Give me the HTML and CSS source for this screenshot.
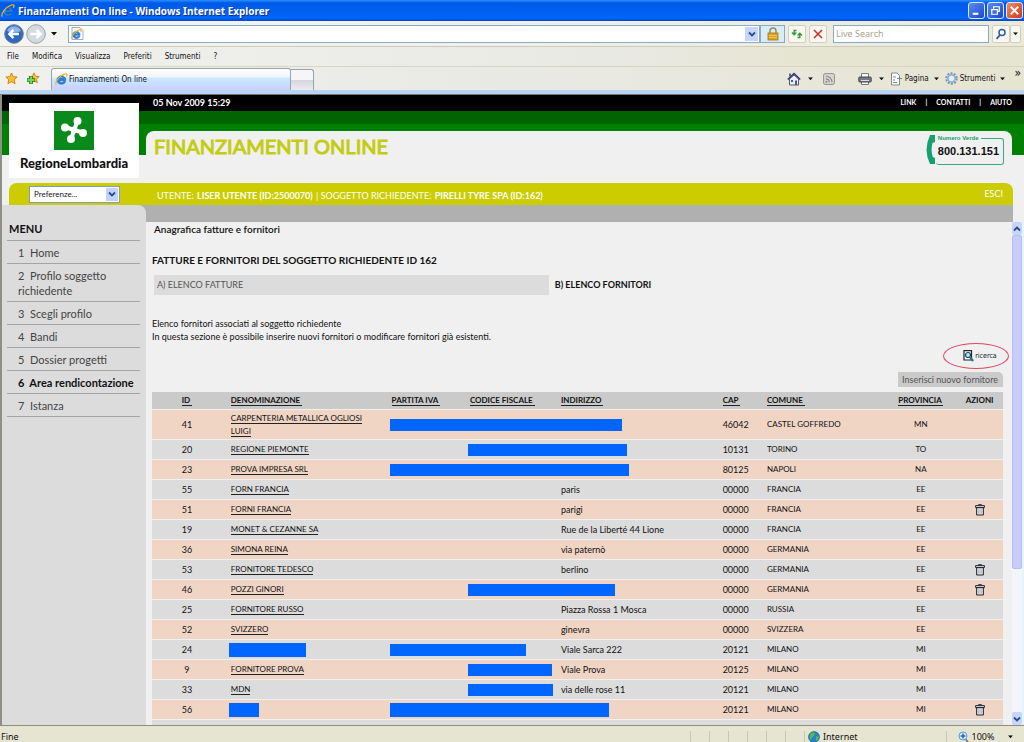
FILE: index.html
```html
<!DOCTYPE html>
<html lang="it">
<head>
<meta charset="utf-8">
<title>Finanziamenti On line</title>
<link rel="stylesheet" href="styles.css">
</head>
<body>
<svg class="defs" width="0" height="0" aria-hidden="true">
  <symbol id="ie" viewBox="0 0 14 14">
    <path d="M11.600 8H4.800c.2 2.600 3.200 2.800 4.100 1.300h2.500C10 13.300 2 13 2.200 7.200 2.400 1.800 11.900 1.400 11.600 8zM4.800 6h4.400C9 3.900 5.100 3.900 4.800 6z" fill="#2a86e0" stroke="#1560b8" stroke-width=".8"/>
    <path d="M1.500 12.500C-.5 11 4 3 10.500 1c3-.8 3 1 1.800 3" fill="none" stroke="#f0b020" stroke-width="1.300"/>
  </symbol>
  <symbol id="down" viewBox="0 0 8 8"><path d="M1 2.500l3 3 3-3" fill="none" stroke="#2b4a8c" stroke-width="1.800"/></symbol>
  <symbol id="up" viewBox="0 0 8 8"><path d="M1 5.500l3-3 3 3" fill="none" stroke="#2b4a8c" stroke-width="1.800"/></symbol>
  <symbol id="tri" viewBox="0 0 6 4"><path d="M0 0h6L3 3.500z" fill="#111"/></symbol>
  <symbol id="star" viewBox="0 0 14 14"><path d="M7 1l1.800 4 4.300.4-3.200 2.900 1 4.300L7 10.400l-3.900 2.200 1-4.300L.9 5.400 5.200 5z" fill="#fbc02d" stroke="#c77a08" stroke-width=".9"/></symbol>
  <symbol id="trash" viewBox="0 0 10 12"><path d="M3.500 1.500V.7h3v.8M.6 1.600h8.800v2H.6zM1.600 3.600h6.800V11H1.600z" fill="#ddd" stroke="#222838" stroke-width="1"/><path d="M3.800 5.500v4M6.200 5.500v4" stroke="#8a8f98" stroke-width=".6"/></symbol>
</svg>

<header class="titlebar">
  <svg width="14" height="14"><use href="#ie"/></svg>
  <span class="title-text">Finanziamenti On line - Windows Internet Explorer</span>
  <button class="win" aria-label="Riduci"><svg width="16" height="16" viewBox="0 0 16 16"><path d="M4 11.500h6" stroke="#fff" stroke-width="2.200"/></svg></button>
  <button class="win" aria-label="Ripristina"><svg width="16" height="16" viewBox="0 0 16 16"><path d="M6 6V4h6v5h-2M4 7h6v5H4z" fill="none" stroke="#fff" stroke-width="1.300"/></svg></button>
  <button class="win close" aria-label="Chiudi"><svg width="16" height="16" viewBox="0 0 16 16"><path d="M4 4l8 8M12 4l-8 8" stroke="#fff" stroke-width="2"/></svg></button>
</header>

<div class="addressbar">
  <button class="plain" aria-label="Indietro"><svg width="20" height="20" viewBox="0 0 20 20"><circle cx="10" cy="10" r="9.300" fill="#2d68bd" stroke="#6d7f98"/><path d="M3 7a7.600 7.600 0 0 1 14 0q-7 3-14 0z" fill="#8db4e6"/><path d="M15 10H6M9.500 5.800L5.300 10l4.200 4.200" fill="none" stroke="#fff" stroke-width="2.400"/></svg></button>
  <button class="plain" aria-label="Avanti"><svg width="20" height="20" viewBox="0 0 20 20"><circle cx="10" cy="10" r="9.300" fill="#d5dae0" stroke="#9aa1aa"/><path d="M4.500 10H14M10.500 5.800l4.200 4.200-4.200 4.200" fill="none" stroke="#fff" stroke-width="2.400"/></svg></button>
  <button class="plain recent" aria-label="Cronologia"><svg width="6" height="4"><use href="#tri"/></svg></button>
  <div class="field url">
    <svg class="page-ico" width="13" height="13" viewBox="0 0 13 13"><path d="M1 .5h8l3 3v9H1z" fill="#fff" stroke="#aab"/><use href="#ie" x="0" y="2" width="11" height="11"/></svg>
    <input type="text" aria-label="Indirizzo">
    <button class="drop" aria-label="Mostra indirizzi"><svg width="8" height="8"><use href="#down"/></svg></button>
  </div>
  <button class="lock" aria-label="Protezione"><svg width="12" height="14" viewBox="0 0 12 14"><path d="M3 7V4a3 3 0 0 1 6 0v3" fill="none" stroke="#a08a50" stroke-width="1.500"/><rect x="1" y="6" width="10" height="7" fill="#dfa320" stroke="#a87410" stroke-width=".8"/><path d="M2 8.500h8M2 10.500h8" stroke="#f6d070" stroke-width=".7"/></svg></button>
  <button class="tool" aria-label="Aggiorna"><svg width="12" height="12" viewBox="0 0 12 12"><path d="M5.500 2.500H3.200V6M1 4.600l2.200 2.200 2.200-2.200M6.500 9.500h2.300V6M6.600 7.400l2.200-2.200L11 7.400" fill="none" stroke="#2f9a3c" stroke-width="1.400"/></svg></button>
  <button class="tool" aria-label="Interrompi"><svg width="12" height="12" viewBox="0 0 12 12"><path d="M2 2l8 8M10 2l-8 8" stroke="#d02a2a" stroke-width="1.500"/></svg></button>
  <input class="field search" type="text" placeholder="Live Search" aria-label="Live Search">
  <button class="tool find" aria-label="Cerca"><svg width="12" height="12" viewBox="0 0 12 12"><circle cx="7" cy="4.500" r="3" fill="#fff" stroke="#2c5aa8" stroke-width="1.500"/><path d="M5 7l-3.500 3.800" stroke="#2c5aa8" stroke-width="1.800"/></svg></button>
  <button class="tool opts" aria-label="Opzioni di ricerca"><svg width="5" height="4" viewBox="0 0 6 4"><use href="#tri"/></svg></button>
</div>

<nav class="menubar">
  <button>File</button><button>Modifica</button><button>Visualizza</button><button>Preferiti</button><button>Strumenti</button><button>?</button>
</nav>

<div class="tabbar">
  <button class="plain" aria-label="Preferiti"><svg width="13" height="13"><use href="#star"/></svg></button>
  <button class="plain add" aria-label="Aggiungi a Preferiti"><svg width="14" height="14" viewBox="0 0 14 14"><use href="#star" x="2" width="12" height="12"/><path d="M5 4v8M1 8h8" stroke="#27752a" stroke-width="3.600"/><path d="M5 4.600v6.800M1.600 8h6.800" stroke="#6fdc55" stroke-width="2"/></svg></button>
  <button class="tab"><svg width="13" height="13"><use href="#ie"/></svg>Finanziamenti On line</button>
  <button class="newtab" aria-label="Nuova scheda"></button>
  <div class="commands">
    <button class="plain" aria-label="Pagina iniziale"><svg width="14" height="14" viewBox="0 0 14 14"><path d="M2.500 7v6h9V7L7 3z" fill="#eef" stroke="#555a70"/><path d="M.8 7.500L7 1.500l6.200 6" fill="none" stroke="#343a78" stroke-width="1.600"/><path d="M3 1.500v3" stroke="#343a78" stroke-width="1.400"/><path d="M4 8h2v2H4zM8 8.500h2V13H8z" fill="#4658a0"/></svg></button>
    <button class="plain arrow" aria-label="Opzioni pagina iniziale"><svg width="5" height="4" viewBox="0 0 6 4"><use href="#tri"/></svg></button>
    <button class="plain feed" aria-label="Feed"><svg width="12" height="12" viewBox="0 0 12 12"><rect x=".6" y=".6" width="10.800" height="10.800" rx="1.500" fill="#d8d8d2" stroke="#909090"/><path d="M2.800 3a6.200 6.200 0 0 1 6.200 6.200M2.800 5.800a3.400 3.400 0 0 1 3.400 3.400" fill="none" stroke="#888" stroke-width="1.200"/><circle cx="3.400" cy="8.700" r="1" fill="#888"/></svg></button>
    <button class="plain print" aria-label="Stampa"><svg width="14" height="12" viewBox="0 0 14 12"><path d="M3.500 4V.6h7V4M3.500 9v2.500h7V9" fill="#fff" stroke="#777"/><rect x=".8" y="4" width="12.400" height="5" rx="1" fill="#777b84" stroke="#444"/><path d="M3 7.500h8" stroke="#ddd"/></svg></button>
    <button class="plain arrow" aria-label="Opzioni di stampa"><svg width="5" height="4" viewBox="0 0 6 4"><use href="#tri"/></svg></button>
    <button class="plain"><svg width="13" height="14" viewBox="0 0 13 14"><path d="M1.500 1h5.500l2.500 2.500V13h-8z" fill="#fff" stroke="#888"/><path d="M3 5h3M3 8h2M3 10.500h4M7 6.500h5M9.500 5v3.500" stroke="#6a8a9a"/></svg>Pagina<svg class="tri" width="5" height="4" viewBox="0 0 6 4"><use href="#tri"/></svg></button>
    <button class="plain"><svg width="13" height="13" viewBox="0 0 13 13"><circle cx="6.500" cy="6.500" r="5.200" fill="none" stroke="#7f93a8" stroke-width="2" stroke-dasharray="2 1.270"/><circle cx="6.500" cy="6.500" r="3.600" fill="#e9eef2" stroke="#8ab4dc" stroke-width="1.800"/></svg>Strumenti<svg class="tri" width="5" height="4" viewBox="0 0 6 4"><use href="#tri"/></svg></button>
    <button class="plain more" aria-label="Altri comandi">»</button>
  </div>
</div>

<div class="site">
  <header class="site-head">
    <div class="logo">
      <svg width="40" height="39" viewBox="0 0 40 39"><path fill="#0a8a1c" d="M0 0h40v39H0z"/><g stroke="#fff" stroke-width="4" fill="#fff"><path d="M23.500 10L17 28M11 16l19 6"/></g><g fill="#fff"><circle cx="23.500" cy="10" r="4"/><circle cx="17" cy="28" r="4"/><circle cx="11" cy="16.500" r="4"/><circle cx="29" cy="22" r="4"/><circle cx="20" cy="19" r="3.500"/></g></svg>
      <span>RegioneLombardia</span>
    </div>
    <div class="head-main">
      <div class="topbar">
        <time>05 Nov 2009 15:29</time>
        <nav><a href="#">LINK</a><i>|</i><a href="#">CONTATTI</a><i>|</i><a href="#">AIUTO</a></nav>
      </div>
      <div class="banner">
        <h1>FINANZIAMENTI ONLINE</h1>
        <div class="phone">
          <svg width="10" height="30" viewBox="0 0 10 30"><path d="M4 0h5v7L6.500 8q-2 7 .3 14l2.200 1v6H4Q-3 15 4 0z" fill="#16a070"/></svg>
          <fieldset><legend>Numero Verde</legend>800.131.151</fieldset>
        </div>
      </div>
    </div>
  </header>

  <div class="userbar">
    <div class="prefs">
      <select aria-label="Preferenze"><option>Preferenze...</option></select>
      <span class="knob"><svg width="8" height="8"><use href="#down"/></svg></span>
    </div>
    <p>UTENTE: <b>LISER UTENTE (ID:2500070)</b> <span>|</span> SOGGETTO RICHIEDENTE: <b>PIRELLI TYRE SPA (ID:162)</b></p>
    <a class="esci" href="#">ESCI</a>
  </div>

  <div class="body">
    <aside>
      <h2>MENU</h2>
      <ul>
        <li><a href="#">1&nbsp; Home</a></li>
        <li><a href="#">2&nbsp; Profilo soggetto richiedente</a></li>
        <li><a href="#">3&nbsp; Scegli profilo</a></li>
        <li><a href="#">4&nbsp; Bandi</a></li>
        <li><a href="#">5&nbsp; Dossier progetti</a></li>
        <li class="current"><a href="#">6&nbsp; Area rendicontazione</a></li>
        <li><a href="#">7&nbsp; Istanza</a></li>
      </ul>
    </aside>
    <div class="right">
      <div class="band"></div>
      <div class="scroller">
        <main>
          <p class="crumb">Anagrafica fatture e fornitori</p>
          <h2>FATTURE E FORNITORI DEL SOGGETTO RICHIEDENTE ID 162</h2>
          <div class="tabs"><a class="off" href="#">A) ELENCO FATTURE</a><a class="on" href="#">B) ELENCO FORNITORI</a></div>
          <p class="intro">Elenco fornitori associati al soggetto richiedente<br>In questa sezione è possibile inserire nuovi fornitori o modificare fornitori già esistenti.</p>
          <a class="ricerca" href="#"><svg width="11" height="12" viewBox="0 0 11 12"><path d="M1 .7h7.500V10H1z" fill="#fff" stroke="#222" stroke-width="1.200"/><circle cx="5" cy="5" r="2.500" fill="#bfe4ee" stroke="#1c4a78" stroke-width="1.200"/><path d="M6.800 7l3.400 4" stroke="#127a8c" stroke-width="2"/></svg>ricerca</a>
          <a class="insert" href="#">Inserisci nuovo fornitore</a>
          <table>
            <colgroup><col class="c1"><col class="c2"><col class="c3"><col class="c4"><col class="c5"><col class="c6"><col class="c7"><col class="c8"><col class="c9"></colgroup>
            <thead><tr><th><a href="#">ID&nbsp;</a></th><th><a href="#">DENOMINAZIONE&nbsp;</a></th><th><a href="#">PARTITA IVA&nbsp;</a></th><th><a href="#">CODICE FISCALE&nbsp;</a></th><th><a href="#">INDIRIZZO&nbsp;</a></th><th><a href="#">CAP&nbsp;</a></th><th><a href="#">COMUNE&nbsp;</a></th><th><a href="#">PROVINCIA&nbsp;</a></th><th>AZIONI</th></tr></thead>
            <tbody>
              <tr><td>41</td><td><a href="#">CARPENTERIA METALLICA OGLIOSI LUIGI</a></td><td><span class="mask" style="width:232px"></span></td><td></td><td></td><td>46042</td><td>CASTEL GOFFREDO</td><td>MN</td><td></td></tr>
              <tr><td>20</td><td><a href="#">REGIONE PIEMONTE</a></td><td></td><td><span class="mask" style="width:159px"></span></td><td></td><td>10131</td><td>TORINO</td><td>TO</td><td></td></tr>
              <tr><td>23</td><td><a href="#">PROVA IMPRESA SRL</a></td><td><span class="mask" style="width:239px"></span></td><td></td><td></td><td>80125</td><td>NAPOLI</td><td>NA</td><td></td></tr>
              <tr><td>55</td><td><a href="#">FORN FRANCIA</a></td><td></td><td></td><td>paris</td><td>00000</td><td>FRANCIA</td><td>EE</td><td></td></tr>
              <tr><td>51</td><td><a href="#">FORNI FRANCIA</a></td><td></td><td></td><td>parigi</td><td>00000</td><td>FRANCIA</td><td>EE</td><td><button aria-label="Elimina"><svg width="10" height="12"><use href="#trash"/></svg></button></td></tr>
              <tr><td>19</td><td><a href="#">MONET &amp; CEZANNE SA</a></td><td></td><td></td><td>Rue de la Liberté 44 Lione</td><td>00000</td><td>FRANCIA</td><td>EE</td><td></td></tr>
              <tr><td>36</td><td><a href="#">SIMONA REINA</a></td><td></td><td></td><td>via paternò</td><td>00000</td><td>GERMANIA</td><td>EE</td><td></td></tr>
              <tr><td>53</td><td><a href="#">FRONITORE TEDESCO</a></td><td></td><td></td><td>berlino</td><td>00000</td><td>GERMANIA</td><td>EE</td><td><button aria-label="Elimina"><svg width="10" height="12"><use href="#trash"/></svg></button></td></tr>
              <tr><td>46</td><td><a href="#">POZZI GINORI</a></td><td></td><td><span class="mask" style="width:147px"></span></td><td></td><td>00000</td><td>GERMANIA</td><td>EE</td><td><button aria-label="Elimina"><svg width="10" height="12"><use href="#trash"/></svg></button></td></tr>
              <tr><td>25</td><td><a href="#">FORNITORE RUSSO</a></td><td></td><td></td><td>Piazza Rossa 1 Mosca</td><td>00000</td><td>RUSSIA</td><td>EE</td><td></td></tr>
              <tr><td>52</td><td><a href="#">SVIZZERO</a></td><td></td><td></td><td>ginevra</td><td>00000</td><td>SVIZZERA</td><td>EE</td><td></td></tr>
              <tr><td>24</td><td><span class="mask tall" style="width:77px"></span></td><td><span class="mask" style="width:136px"></span></td><td></td><td>Viale Sarca 222</td><td>20121</td><td>MILANO</td><td>MI</td><td></td></tr>
              <tr><td>9</td><td><a href="#">FORNITORE PROVA</a></td><td></td><td><span class="mask" style="width:84px"></span></td><td>Viale Prova</td><td>20125</td><td>MILANO</td><td>MI</td><td></td></tr>
              <tr><td>33</td><td><a href="#">MDN</a></td><td></td><td><span class="mask" style="width:85px"></span></td><td>via delle rose 11</td><td>20121</td><td>MILANO</td><td>MI</td><td></td></tr>
              <tr><td>56</td><td><span class="mask tall" style="width:30px"></span></td><td><span class="mask tall" style="width:219px"></span></td><td></td><td></td><td>20121</td><td>MILANO</td><td>MI</td><td><button aria-label="Elimina"><svg width="10" height="12"><use href="#trash"/></svg></button></td></tr>
              <tr><td></td><td></td><td></td><td></td><td></td><td></td><td></td><td></td><td></td></tr>
            </tbody>
          </table>
        </main>
        <div class="scrollbar">
          <button aria-label="Scorri su"><svg width="8" height="8"><use href="#up"/></svg></button>
          <div class="track"><div class="thumb"></div></div>
          <button aria-label="Scorri giù"><svg width="8" height="8"><use href="#down"/></svg></button>
        </div>
      </div>
    </div>
  </div>
</div>

<footer class="status">
  <span class="msg">Fine</span>
  <i></i><i></i><i></i><i></i><i></i><i></i>
  <span class="zone"><svg width="12" height="12" viewBox="0 0 12 12"><circle cx="6" cy="6" r="5.500" fill="#2c7fd0" stroke="#1a5090" stroke-width=".6"/><path d="M2 3q3-3 5-1l-1 3-2 1-1 3Q1 7 2 3zM8 5l3 1-1 3-2 1z" fill="#4cc04a"/></svg>Internet</span>
  <button class="zoom"><svg width="11" height="12" viewBox="0 0 11 12"><path d="M7 7.500l3 3.500" stroke="#777" stroke-width="1.800"/><circle cx="5" cy="5" r="4" fill="#d6ecff" stroke="#5a9ad8"/><path d="M5 2.600v4.800M2.600 5h4.800" stroke="#1f62b8" stroke-width="1.400"/></svg>100%<svg class="tri" width="5" height="4" viewBox="0 0 6 4"><use href="#tri"/></svg></button>
</footer>
</body>
</html>
```
FILE: styles.css
```css
* { box-sizing: border-box; }
html, body { height: 100%; }
body {
  margin: 0;
  display: flex;
  flex-direction: column;
  overflow: hidden;
  background: #ece9d8;
  color: #111;
  font: 9px/12px "Noto Sans", "Open Sans", sans-serif;
}
h1, h2, p, ul { margin: 0; padding: 0; }
button { font: inherit; color: inherit; padding: 0; border: 0; background: none; display: inline-flex; align-items: center; justify-content: center; }
a { color: inherit; text-decoration: none; }
svg { flex: none; display: block; }
.defs { position: absolute; }

/* browser chrome */
.titlebar {
  display: flex; align-items: center; gap: 2px; flex: none;
  height: 21px; padding: 0 1px;
  background: linear-gradient(#2a90ff 0, #0058e6 3px, #0062f5 14px, #0066ff 18px, #0046c0 21px);
  color: #fff;
}
.title-text { flex: 1; margin-left: 1px; font-size: 10px; font-weight: 700; text-shadow: 1px 1px #0a2f8a; }
.win { width: 17px; height: 17px; border: 1px solid #dfe8ff; border-radius: 3px; background: linear-gradient(135deg, #5a8cf5, #1c48cc); }
.win svg { width: 15px; height: 15px; }
.win.close { background: linear-gradient(135deg, #f08a68, #d03818); }

.addressbar {
  display: flex; align-items: center; flex: none;
  height: 26px; padding: 0 3px 0 4px;
  background: linear-gradient(90deg, #f4f4f2, #f0f0ea 50%, #ece9d8);
  border-bottom: 1px solid #cfccb8;
}
.plain { gap: 2px; white-space: nowrap; }
.addressbar .plain + .plain { margin-left: 2px; }
.addressbar .plain.recent { margin: 0 11px 0 5px; }
.field { height: 18px; border: 1px solid #8aa8c8; background: #fff; }
.url { flex: 1; display: flex; align-items: center; padding-left: 2px; }
.url input { flex: 1; min-width: 0; border: 0; outline: 0; font: inherit; background: none; }
.drop { width: 13px; height: 14px; margin-right: 1px; background: #c6d6fa; }
.lock { width: 25px; height: 18px; border: 1px solid #8aa8c8; background: #d6eefc; }
.tool { width: 18px; height: 18px; margin-left: 3px; border: 1px solid #d2cfc0; border-radius: 2px; background: #f8f7f0; }
.search { width: 156px; margin-left: 6px; padding: 0 2px; font: inherit; border-radius: 0; }
.search::placeholder { color: #a8a48c; opacity: 1; }
.find { width: 18px; }
.opts { width: 11px; margin-left: 0; }

.menubar {
  display: flex; align-items: center; gap: 13px; flex: none;
  height: 20px; padding-left: 7px;
  background: linear-gradient(90deg, #f0f0ee, #e9e9e4 60%, #e6e5d2 78%);
  border-bottom: 1px solid #d8d5c0;
}
.menubar, .tabbar { font: 8px/12px "DejaVu Sans Condensed", "DejaVu Sans", sans-serif; }

.tabbar {
  display: flex; align-items: center; flex: none;
  height: 28px; padding: 0 3px 4px 5px;
  border-bottom: 1px solid #77746a;
  background: linear-gradient(transparent 23px, #b9d3f4 23px), linear-gradient(90deg, #f0f0ee, #e9e9e4 50%, #e6e5d2);
}
.tabbar .add { margin: 0 11px 0 8px; }
.tab {
  align-self: flex-end; justify-content: flex-start; gap: 1px;
  width: 240px; height: 22px; padding-left: 3px;
  border: 1px solid #97a3b0; border-bottom: 0; border-radius: 3px 3px 0 0;
  background: linear-gradient(#fff 0, #f2f4f8 8px, #c9ebff 9px, #c8d0ff 100%);
}
.newtab { align-self: flex-end; width: 23px; height: 21px; border: 1px solid #97a3b0; border-bottom: 0; border-left: 0; border-radius: 0 3px 0 0; background: linear-gradient(#f6f6f6 50%, #d4d4dc 50%, #ececf0); }
.commands { flex: 1; align-self: stretch; display: flex; align-items: center; justify-content: flex-end; }
.commands .arrow { margin: 0 10px 0 7px; }
.commands .feed { margin-right: 23px; }
.commands .print + .arrow { margin: 0 6px 0 7px; }
.tri { margin-left: 3px; }
.commands .plain:nth-last-child(2) { margin: 0 9px 0 6px; }
.more { align-self: flex-start; font-size: 12px; }

/* site */
.site {
  flex: 1; min-height: 0; display: flex; flex-direction: column; overflow: hidden;
  border-left: 2px solid #8f8f88;
  background: linear-gradient(#000 16px, #006400 16px, #006400 29px, #008000 29px, #008000 60px, #f0f0f0 60px);
  font-family: Lato, sans-serif;
}
.site-head { display: grid; grid-template-columns: 144px 1fr; flex: none; height: 88px; }
.logo {
  display: flex; flex-direction: column; align-items: center; gap: 4px;
  margin: 8px 7px 5px; padding-top: 8px; background: #fff;
  font: 900 13px/18px Lato, sans-serif;
}
.head-main { display: flex; flex-direction: column; gap: 20px; }
.topbar { display: flex; justify-content: space-between; padding: 0 12px 0 7px; color: #fff; font-weight: 700; line-height: 16px; }
.topbar nav { display: flex; font-size: 7px; line-height: 14px; }
.topbar i { font-style: normal; margin: 0 9px; }
.banner { flex: 1; display: flex; justify-content: space-between; margin-right: 12px; padding: 4px 8px 0; border-radius: 8px 8px 0 0; background: #f0f0f0; }
h1 { color: #c4cc12; font-size: 20px; line-height: 22px; font-weight: 400; -webkit-text-stroke: 1px #c4cc12; }
.phone { display: flex; align-items: flex-start; }
.phone fieldset { margin: 0; height: 30px; padding: 0 4px 0 2px; border: 1px solid #3aa888; border-left: 0; border-radius: 3px; font: 700 11px/20px "Liberation Sans", sans-serif; }
.phone legend { margin-left: -2px; padding: 0 2px; color: #16a070; font-size: 6px; line-height: 6px; font-weight: 700; }

.userbar { display: flex; align-items: center; flex: none; height: 22px; margin: 0 11px 0 7px; padding: 0 10px 0 20px; border-radius: 8px 8px 0 0; background: #cccc00; color: #fff; }
.prefs { display: grid; width: 91px; height: 17px; }
.prefs > * { grid-area: 1 / 1; }
.prefs select { appearance: none; width: 100%; height: 17px; border: 1px solid #7f9db9; border-radius: 0; background: #fff; padding: 0 4px; font: 8px/15px Lato, sans-serif; color: #222; }
.knob { justify-self: end; display: grid; place-items: center; width: 12px; margin: 2px; background: #c2d3fb; pointer-events: none; }
.userbar p { flex: 1; margin-left: 37px; padding-top: 4px; line-height: 18px; }
.userbar b { margin: 0 1px; }

.body { flex: 1; min-height: 0; display: grid; grid-template-columns: 144px 1fr; background: linear-gradient(#b0b0b0 17px, transparent 17px) 0 0 / calc(100% - 11px) no-repeat; }
aside { padding: 17px 6px 0 5px; background: #dcdcdc; border-radius: 0 8px 0 0; }
aside h2 { padding-left: 2px; font-size: 11px; line-height: 14px; margin-bottom: 4px; }
aside ul { list-style: none; border-top: 1px solid #a4a4a4; }
aside li { padding: 4px 0 3px 11px; border-bottom: 1px solid #a4a4a4; font-size: 11px; line-height: 15px; color: #444; }
aside .current { font-weight: 700; color: #111; white-space: nowrap; }

.right { display: flex; flex-direction: column; min-width: 0; min-height: 0; }
.band { flex: none; height: 17px; margin-right: 11px; }
.scroller { flex: 1; min-height: 0; display: flex; }
main { flex: 1; min-width: 0; overflow: hidden; padding: 0 9px 0 6px; display: flex; flex-direction: column; }
.crumb { padding-left: 2px; font-size: 10px; line-height: 14px; }
.crumb { -webkit-text-stroke: 0; font-weight: 600; }
main h2 { margin-top: 16px; font-size: 10px; line-height: 16px; }
.tabs { display: flex; gap: 6px; margin-top: 7px; padding-left: 2px; line-height: 20px; }
.tabs .off { width: 46.5%; padding-left: 3px; background: #dcdcdc; color: #555; }
.tabs .on { font-weight: 700; }
.intro { margin-top: 22px; line-height: 13px; }
.ricerca { flex: none; align-self: flex-end; display: flex; align-items: center; justify-content: center; gap: 1px; width: 66px; height: 26px; margin-right: -6px; padding-left: 8px; border: 1px solid #e04858; border-radius: 50%; font: 7px/10px "DejaVu Sans Condensed", "DejaVu Sans", sans-serif; }
.insert { flex: none; align-self: flex-end; margin: 3px 0 4px; padding: 0 5px 0 4px; border-radius: 0 5px 0 0; background: #cacaca; color: #555; line-height: 15px; }

table { flex: none; width: 100%; table-layout: fixed; border-collapse: separate; border-spacing: 0 1px; }
.c1 { width: 8.2%; } .c2 { width: 18.9%; } .c3 { width: 9.2%; } .c4 { width: 10.7%; } .c5 { width: 19%; }
.c6 { width: 5.2%; } .c7 { width: 15%; } .c8 { width: 8.3%; } .c9 { width: 5.5%; }
th, td { padding: 0 0 0 9px; text-align: left; white-space: nowrap; line-height: 13px; }
th { height: 17px; font-size: 8px; font-weight: 700; }
td { height: 19px; }
td:nth-child(2), td:nth-child(7), td:nth-child(8) { font-size: 8px; }
td:nth-child(2) { white-space: normal; padding-right: 12px; }
th:nth-child(1), td:nth-child(1), th:nth-child(8), td:nth-child(8), th:nth-child(9), td:nth-child(9) { padding: 0; text-align: center; }
thead tr { background: #cacaca; }
tbody tr { background: #dcdcdc; }
tbody tr:nth-child(odd) { background: #f0d5c5; }
tbody tr:first-child td { height: 29px; }
table a { border-bottom: 1px solid #222; }
td button { vertical-align: middle; }
.mask { display: inline-block; height: 12px; margin-left: -2px; vertical-align: middle; background: #0066ff; }
.mask.tall { height: 14px; }

.scrollbar { flex: none; width: 12px; display: flex; flex-direction: column; background: #f4f4fc; border-right: 2px solid #e4f4fa; }
.scrollbar button { height: 13px; background: #c6d6fb; border-radius: 2px; }
.track { flex: 1; min-height: 0; }
.thumb { height: 70%; background: #c8ccfc; border: 1px solid #b4c0f4; border-radius: 2px; }

.status { flex: none; display: flex; align-items: center; height: 17px; border-top: 1px solid #8d8d80; background: #e6e5d2; padding-top: 5px; }
.msg { flex: 1; padding-left: 1px; }
.status i { width: 19px; height: 12px; border-left: 1px solid #c9c6b2; }
.zone { display: flex; align-items: center; gap: 3px; width: 142px; padding-left: 3px; border-left: 1px solid #c9c6b2; }
.zoom { width: 78px; gap: 3px; border-left: 1px solid #c9c6b2; }
.zoom .tri { margin-left: 11px; }
```
